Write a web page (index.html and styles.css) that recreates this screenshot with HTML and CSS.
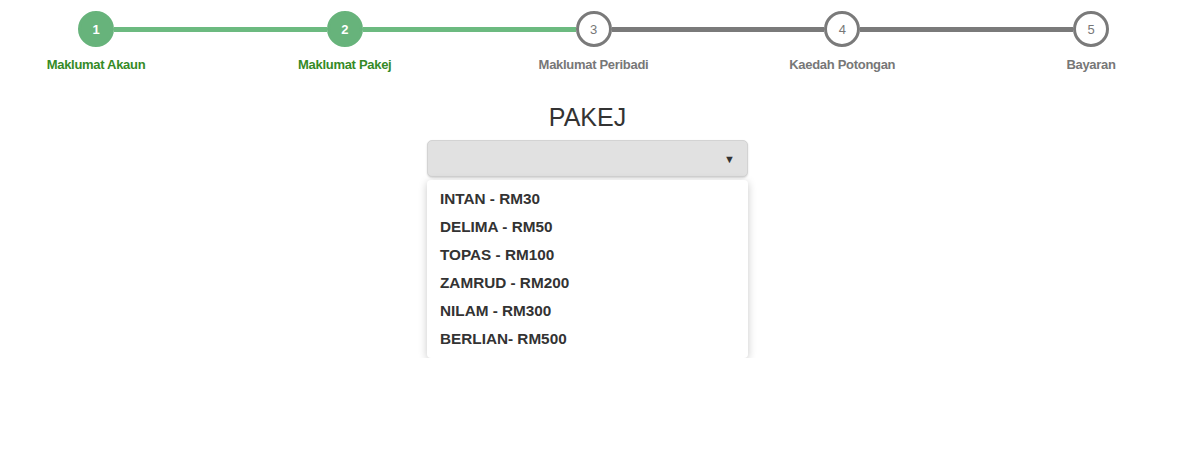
FILE: index.html
```html
<!DOCTYPE html>
<html>
<head>
	<meta charset='utf-8'/>
	<title>Pakej</title>
	<link rel="stylesheet" href="styles.css">
</head>
<body>

	<div class="steps">
		<div class="step done">
			<div class="circle">1</div>
			<div class="label">Maklumat Akaun</div>
		</div>
		<div class="line done"></div>
		<div class="step done">
			<div class="circle">2</div>
			<div class="label">Maklumat Pakej</div>
		</div>
		<div class="line done"></div>
		<div class="step">
			<div class="circle">3</div>
			<div class="label">Maklumat Peribadi</div>
		</div>
		<div class="line"></div>
		<div class="step">
			<div class="circle">4</div>
			<div class="label">Kaedah Potongan</div>
		</div>
		<div class="line"></div>
		<div class="step">
			<div class="circle">5</div>
			<div class="label">Bayaran</div>
		</div>
	</div>

	<div class="form">
		<h2 class="title">PAKEJ</h2>
		<div class="select">
			<span class="arrow">&#9660;</span>
		</div>
		<ul class="options">
			<li>INTAN - RM30</li>
			<li>DELIMA - RM50</li>
			<li>TOPAS - RM100</li>
			<li>ZAMRUD - RM200</li>
			<li>NILAM - RM300</li>
			<li>BERLIAN- RM500</li>
		</ul>
	</div>

</body>
</html>
```

FILE: styles.css
```css
*{
	margin:0;padding:0;
	box-sizing:border-box;
}
body{
	font-family:"Liberation Sans",Arial,sans-serif;
	background:#fff;
	color:#333;
}

/* wizard steps */
.steps{
	display:flex;
	padding:11px 91px 0 78px;
}
.step{
	width:36px;
	display:flex;
	flex-direction:column;
	align-items:center;
}
.step .circle{
	width:36px;
	height:36px;
	border-radius:50%;
	border:3px solid #7a7a7a;
	background:#fff;
	color:#777;
	font-size:13px;
	display:flex;
	align-items:center;
	justify-content:center;
}
.step.done .circle{
	border-color:#67b37b;
	background:#67b37b;
	color:#fff;
	font-weight:bold;
}
.step .label{
	margin-top:10px;
	font-size:13px;
	line-height:16px;
	font-weight:bold;
	letter-spacing:-0.3px;
	white-space:nowrap;
	color:#777;
}
.step.done .label{
	color:#358a26;
}
.line{
	flex:1;
	height:5px;
	margin-top:16px;
	background:#7a7a7a;
}
.line.done{
	background:#6cba80;
}

/* package select */
.form{
	display:flex;
	flex-direction:column;
	align-items:center;
	padding-right:25px;
	margin-top:30px;
}
.title{
	font-size:25px;
	line-height:28px;
	font-weight:normal;
	color:#333;
}
.select{
	width:321px;
	height:37px;
	margin-top:9px;
	background:#e1e1e1;
	border:1px solid #d3d3d3;
	border-radius:5px;
	box-shadow:0 1px 2px rgba(0,0,0,0.15);
	display:flex;
	align-items:center;
	justify-content:flex-end;
	padding-right:12px;
}
.select .arrow{
	font-size:11px;
	color:#333;
}
.options{
	list-style:none;
	width:321px;
	margin-top:3px;
	padding:5px 0;
	background:#fff;
	border-radius:4px;
	box-shadow:0 2px 8px rgba(0,0,0,0.22);
}
.options li{
	padding-left:13px;
	font-size:15.3px;
	line-height:28px;
	font-weight:bold;
	color:#333;
}
```
